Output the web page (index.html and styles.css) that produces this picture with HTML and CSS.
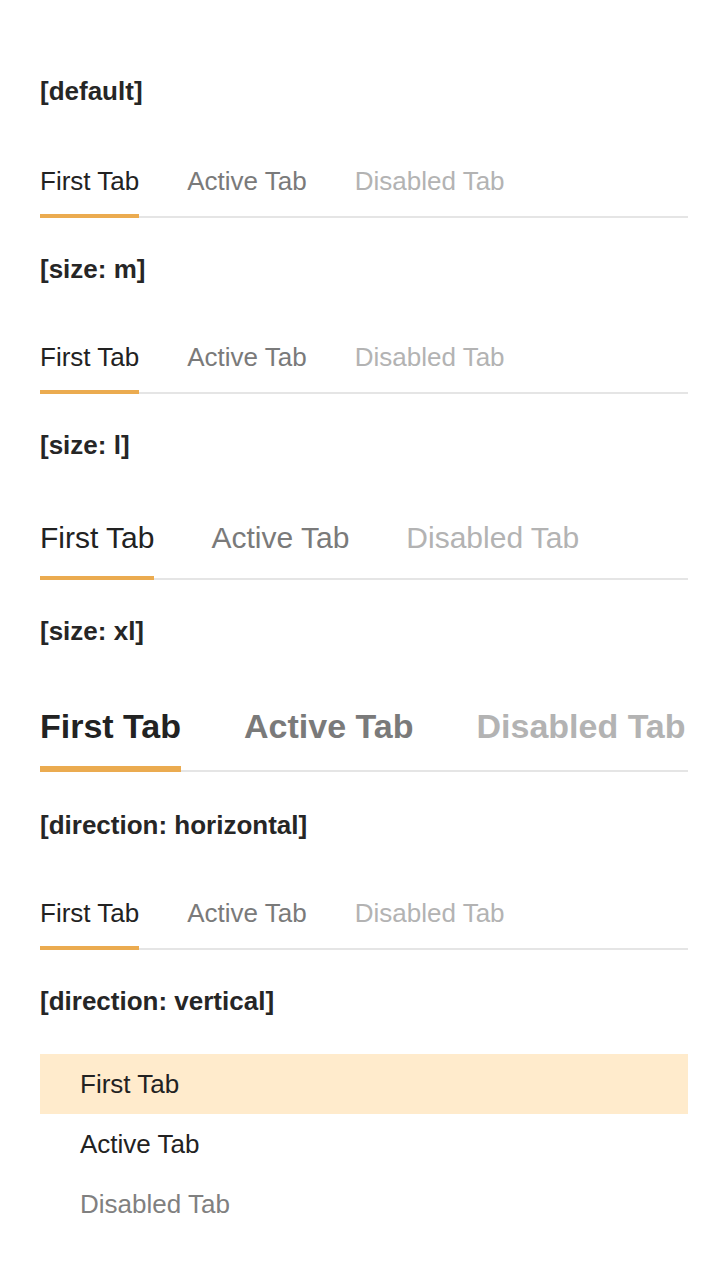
FILE: index.html
```html
<!DOCTYPE html>
<html lang="en">
<head>
<meta charset="utf-8">
<title>Tabs</title>
<link rel="stylesheet" href="styles.css">
</head>
<body>
<main class="page">
  <section class="demo">
    <h2 class="demo-title">[default]</h2>
    <div class="tabs tabs-m tabs-first" role="tablist">
      <div class="tab is-selected" role="tab">First Tab</div>
      <div class="tab" role="tab">Active Tab</div>
      <div class="tab is-disabled" role="tab">Disabled Tab</div>
    </div>
  </section>
  <section class="demo">
    <h2 class="demo-title">[size: m]</h2>
    <div class="tabs tabs-m" role="tablist">
      <div class="tab is-selected" role="tab">First Tab</div>
      <div class="tab" role="tab">Active Tab</div>
      <div class="tab is-disabled" role="tab">Disabled Tab</div>
    </div>
  </section>
  <section class="demo">
    <h2 class="demo-title">[size: l]</h2>
    <div class="tabs tabs-l" role="tablist">
      <div class="tab is-selected" role="tab">First Tab</div>
      <div class="tab" role="tab">Active Tab</div>
      <div class="tab is-disabled" role="tab">Disabled Tab</div>
    </div>
  </section>
  <section class="demo demo-xl">
    <h2 class="demo-title">[size: xl]</h2>
    <div class="tabs tabs-xl" role="tablist">
      <div class="tab is-selected" role="tab">First Tab</div>
      <div class="tab" role="tab">Active Tab</div>
      <div class="tab is-disabled" role="tab">Disabled Tab</div>
    </div>
  </section>
  <section class="demo">
    <h2 class="demo-title">[direction: horizontal]</h2>
    <div class="tabs tabs-m" role="tablist">
      <div class="tab is-selected" role="tab">First Tab</div>
      <div class="tab" role="tab">Active Tab</div>
      <div class="tab is-disabled" role="tab">Disabled Tab</div>
    </div>
  </section>
  <section class="demo">
    <h2 class="demo-title">[direction: vertical]</h2>
    <div class="vtabs" role="tablist">
      <div class="vtab is-selected" role="tab">First Tab</div>
      <div class="vtab" role="tab">Active Tab</div>
      <div class="vtab is-disabled" role="tab">Disabled Tab</div>
    </div>
  </section>
</main>
</body>
</html>
```

FILE: styles.css
```css
html, body {
  margin: 0;
  padding: 0;
  background: #ffffff;
}

body {
  font-family: "Liberation Sans", Arial, sans-serif;
  color: #222222;
}

.page {
  padding: 76px 40px 40px;
  display: flex;
  flex-direction: column;
}

.demo {
  display: flex;
  flex-direction: column;
  margin-bottom: 36px;
}

.demo-xl {
  margin-bottom: 38px;
}

.demo-title {
  margin: 0;
  font-size: 26px;
  line-height: 30px;
  font-weight: 700;
  color: #262626;
}

.tabs {
  display: flex;
  border-bottom: 2px solid #e5e5e5;
}

.tab {
  color: #7a7a7a;
  white-space: nowrap;
  border-bottom: 4px solid transparent;
  margin-bottom: -2px;
}

.tab.is-selected {
  color: #222222;
  border-bottom-color: #ebab50;
}

.tab.is-disabled {
  color: #b3b3b3;
}

.tabs-m {
  margin-top: 58px;
  gap: 48px;
}

.tabs-first {
  margin-top: 60px;
}

.tabs-m .tab {
  font-size: 26px;
  line-height: 30px;
  padding-bottom: 18px;
}

.tabs-l {
  margin-top: 61px;
  gap: 57px;
}

.tabs-l .tab {
  font-size: 30px;
  line-height: 34px;
  padding-bottom: 21px;
}

.tabs-xl {
  margin-top: 61px;
  gap: 63px;
}

.tabs-xl .tab {
  font-size: 34px;
  line-height: 38px;
  font-weight: 700;
  padding-bottom: 21px;
  border-bottom-width: 6px;
}

.vtabs {
  margin-top: 38px;
  display: flex;
  flex-direction: column;
}

.vtab {
  height: 60px;
  display: flex;
  align-items: center;
  padding-left: 40px;
  font-size: 26px;
  color: #222222;
}

.vtab.is-selected {
  background: #ffebcc;
}

.vtab.is-disabled {
  color: #808080;
}
```
